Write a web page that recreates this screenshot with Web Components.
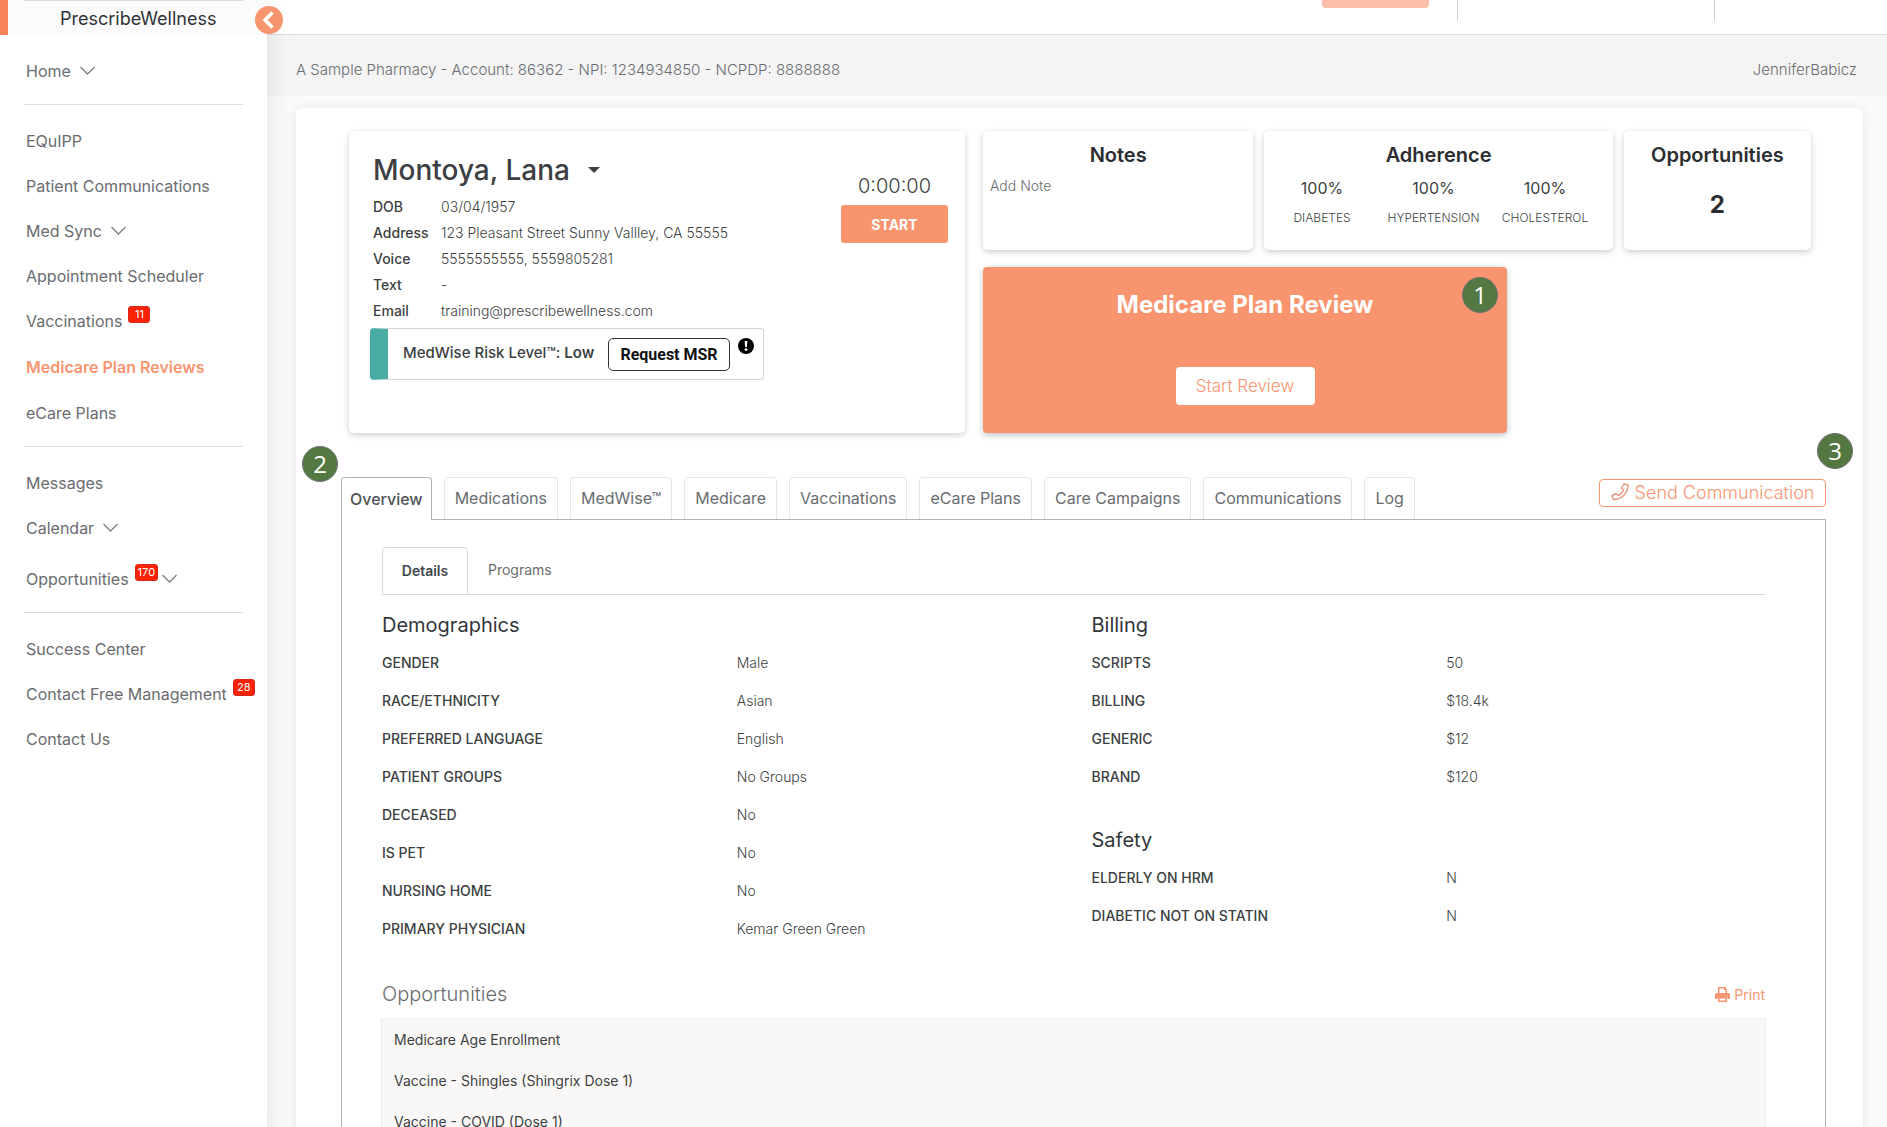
<!DOCTYPE html>
<html lang="en">
<head>
<meta charset="utf-8">
<meta name="viewport" content="width=device-width, initial-scale=1">
<title>PrescribeWellness</title>
<style>
	:root {
		--accent: #f8956f;
		--text: #3d3f42;
		--muted: #6a6c70;
		--line: #dcdcdc;
		--frame: #b4b4b4;
	}
	body {
		margin: 0;
		font-family: Inter, "Open Sans", sans-serif;
		font-size: 14px;
		color: var(--text);
		background: #fafafa;
	}
</style>
</head>
<body>
<app-shell>
	<side-nav slot="nav">
		<nav-group>
			<nav-item caret>Home</nav-item>
		</nav-group>
		<nav-group>
			<nav-item>EQuIPP</nav-item>
			<nav-item>Patient Communications</nav-item>
			<nav-item caret>Med Sync</nav-item>
			<nav-item>Appointment Scheduler</nav-item>
			<nav-item badge="11">Vaccinations</nav-item>
			<nav-item active>Medicare Plan Reviews</nav-item>
			<nav-item>eCare Plans</nav-item>
		</nav-group>
		<nav-group>
			<nav-item>Messages</nav-item>
			<nav-item caret>Calendar</nav-item>
			<nav-item badge="170" caret>Opportunities</nav-item>
		</nav-group>
		<nav-group>
			<nav-item>Success Center</nav-item>
			<nav-item badge="28">Contact Free Management</nav-item>
			<nav-item>Contact Us</nav-item>
		</nav-group>
	</side-nav>

	<top-bar></top-bar>
	<account-bar>
		A Sample Pharmacy - Account: 86362 - NPI: 1234934850 - NCPDP: 8888888
		<span slot="user">JenniferBabicz</span>
	</account-bar>

	<patient-page>
		<patient-card slot="patient" name="Montoya, Lana" timer="0:00:00"></patient-card>
		<stat-card slot="stats" heading="Notes"><note-link>Add Note</note-link></stat-card>
		<stat-card slot="stats" heading="Adherence">
			<adherence-list></adherence-list>
		</stat-card>
		<stat-card slot="stats" heading="Opportunities"><big-count>2</big-count></stat-card>
		<plan-review slot="review"></plan-review>

		<chart-tabs slot="chart">
			<sub-tabs></sub-tabs>
			<chart-columns>
				<info-list slot="left" heading="Demographics" rows='[["Gender","Male"],["Race/Ethnicity","Asian"],["Preferred Language","English"],["Patient Groups","No Groups"],["Deceased","No"],["Is Pet","No"],["Nursing Home","No"],["Primary Physician","Kemar Green Green"]]'></info-list>
				<info-list slot="right" heading="Billing" rows='[["Scripts","50"],["Billing","$18.4k"],["Generic","$12"],["Brand","$120"]]'></info-list>
				<info-list slot="right" heading="Safety" rows='[["Elderly on HRM","N"],["Diabetic not on Statin","N"]]'></info-list>
			</chart-columns>
			<opportunity-list></opportunity-list>
		</chart-tabs>
	</patient-page>
</app-shell>

<script>
class BaseElement extends HTMLElement {
	connectedCallback() {
		if (this.shadowRoot) return;
		this.attachShadow({ mode: "open" });
		this.shadowRoot.innerHTML = `<style>*{box-sizing:border-box} button{font-family:inherit}</style>` + this.render();
	}
	render() {
		return `<slot></slot>`;
	}
}

class AppShell extends BaseElement {
	render() {
		return `
			<style>
				:host { display: grid; grid-template-columns: 267px minmax(0, 1fr); height: 100vh; overflow: hidden; }
				main { min-width: 0; }
			</style>
			<slot name="nav"></slot>
			<main><slot></slot></main>
		`;
	}
}

class SideNav extends BaseElement {
	render() {
		return `
			<style>
				:host { display: block; position: relative; z-index: 2; background: #fff; box-shadow: 0 0 24px rgba(0, 0, 0, 0.1); }
				.brand {
					display: flex; align-items: center; height: 35px; padding: 2px 52px 0;
					border-left: 8px solid #f8835a; background: #fbfbfb;
					color: #2f3338; font-size: 18px; line-height: 32px; white-space: nowrap;
				}
				.rule { position: absolute; top: 0; left: 24px; right: 24px; height: 1px; background: var(--line); }
				.toggle {
					position: absolute; top: 6px; right: -16px; width: 28px; height: 28px; padding: 0;
					border: 0; border-radius: 50%; background: var(--accent);
				}
				nav { padding: 13px 0 0; }
			</style>
			<div class="brand">PrescribeWellness</div>
			<div class="rule"></div>
			<button class="toggle" aria-label="Collapse menu">
				<svg width="28" height="28" viewBox="0 0 28 28"><path d="M17.500 6.500L10 14l7.500 7.500" fill="none" stroke="#fff" stroke-width="3.500"/></svg>
			</button>
			<nav><slot></slot></nav>
		`;
	}
}

class NavGroup extends BaseElement {
	render() {
		return `
			<style>
				:host { display: block; }
				:host(:not(:last-child))::after {
					content: ""; display: block; height: 1px; margin: 11px 24px 13px; background: var(--line);
				}
			</style>
			<slot></slot>
		`;
	}
}

class NavItem extends BaseElement {
	render() {
		const badge = this.getAttribute("badge");
		return `
			<style>
				:host { display: block; }
				a {
					display: flex; align-items: center; height: 45px; padding: 0 0 0 26px;
					color: var(--muted); font-size: 16px; text-decoration: none; white-space: nowrap;
				}
				:host([active]) a { height: 47px; color: var(--accent); font-weight: 600; }
				:host([badge][caret]) a { height: 51px; padding-top: 6px; }
				.badge {
					align-self: flex-start; min-width: 22px; height: 17px; margin: 8px 0 0 6px; padding: 0 2px;
					border: 1px solid #d9261a; border-radius: 3px; background: #fb2305;
					color: #fff; font-size: 11px; line-height: 15px; text-align: center;
				}
				svg { margin-left: 9px; }
				.badge + svg { margin-left: 4px; }
			</style>
			<a href="#"><slot></slot>
				${badge ? `<span class="badge">${badge}</span>` : ""}
				${this.hasAttribute("caret") ? `<svg width="15" height="9" viewBox="0 0 15 9"><path d="M0.5 1l7 7 7-7" fill="none" stroke="#7d7f83" stroke-width="1.3"/></svg>` : ""}
			</a>
		`;
	}
}

class TopBar extends BaseElement {
	render() {
		return `
			<style>
				:host { display: flex; justify-content: flex-end; height: 34px; background: #fff; border-bottom: 1px solid var(--line); }
				.action { width: 107px; height: 8px; margin-right: 28px; border-radius: 0 0 4px 4px; background: #fcbfaa; }
				.cell { height: 21px; border-left: 1px solid #cfcfcf; }
				.wide { width: 257px; }
				.last { width: 173px; }
			</style>
			<div class="action"></div>
			<div class="cell wide"></div>
			<div class="cell last"></div>
		`;
	}
}

class AccountBar extends BaseElement {
	render() {
		return `
			<style>
				:host {
					display: flex; justify-content: space-between; align-items: center; height: 61px;
					padding: 8px 30px 0 29px; box-sizing: border-box; background: #f4f4f4;
					color: var(--muted); font-size: 15px; font-weight: 300;
				}
			</style>
			<span><slot></slot></span>
			<slot name="user"></slot>
		`;
	}
}

class PatientPage extends BaseElement {
	render() {
		return `
			<style>
				:host {
					display: block; margin: 12px 24px 0 29px; padding: 23px 37px 0 45px;
					border-radius: 6px; background: #fff; box-shadow: 0 0 12px rgba(0, 0, 0, 0.08);
				}
				.summary {
					display: grid; grid-template-columns: 616fr 828fr; gap: 18px;
					min-height: 302px; margin: 0 15px 44px 8px;
				}
				.side { display: flex; flex-direction: column; gap: 17px; }
				.stats { display: grid; grid-template-columns: 270fr 348fr 187fr; gap: 11px; height: 119px; }
				.review { display: grid; flex: 1; width: 63.3%; }
			</style>
			<section class="summary">
				<slot name="patient"></slot>
				<div class="side">
					<div class="stats"><slot name="stats"></slot></div>
					<div class="review"><slot name="review"></slot></div>
				</div>
			</section>
			<slot name="chart"></slot>
		`;
	}
}

class PatientCard extends BaseElement {
	render() {
		const rows = [
			["DOB", "03/04/1957"],
			["Address", "123 Pleasant Street Sunny Vallley, CA 55555"],
			["Voice", "5555555555, 5559805281"],
			["Text", "-"],
			["Email", "training@prescribewellness.com"],
		];
		return `
			<style>
				:host {
					display: flex; justify-content: space-between; padding: 20px 17px 0 24px;
					border-radius: 5px; background: #fff; box-shadow: 0 2px 6px rgba(0, 0, 0, 0.2);
				}
				h1 { display: flex; align-items: center; gap: 18px; margin: 0 0 5px; font-size: 28px; font-weight: 500; line-height: 38px; }
				dl { display: grid; grid-template-columns: 68px auto; margin: 0; line-height: 26px; white-space: nowrap; }
				dt { font-size: 14px; font-weight: 500; }
				dd { margin: 0; font-size: 14px; font-weight: 300; }
				.risk {
					display: flex; align-items: center; width: 394px; height: 52px; margin: 4px 0 0 -3px; overflow: hidden;
					border: 1px solid #d4d4d4; border-left: 18px solid #48aca5; border-radius: 4px;
					font-size: 15px; font-weight: 500; white-space: nowrap;
				}
				.risk span { flex: 1; padding: 0 0 3px 15px; }
				.risk b { font-weight: 600; }
				.msr {
					width: 122px; height: 33px; padding: 0; border: 1px solid #333; border-radius: 5px; background: #fff;
					color: #111; font: 700 16px Roboto, sans-serif;
				}
				.risk svg { align-self: flex-start; margin: 9px 9px 0 8px; }
				.timer { width: 107px; padding-top: 22px; text-align: center; font-size: 20px; font-weight: 300; line-height: 26px; }
				.start {
					display: block; width: 100%; height: 38px; margin-top: 6px; border: 0; border-radius: 3px;
					background: var(--accent); color: #fff; font-size: 14px; font-weight: 700;
				}
			</style>
			<div>
				<h1>${this.getAttribute("name")}
					<svg width="12" height="6" viewBox="0 0 12 6"><path d="M0 0h12L6 6z" fill="#3d3f42"/></svg>
				</h1>
				<dl>${rows.map(([k, v]) => `<dt>${k}</dt><dd>${v}</dd>`).join("")}</dl>
				<div class="risk">
					<span>MedWise Risk Level™: <b>Low</b></span>
					<button class="msr">Request MSR</button>
					<svg width="16" height="16" viewBox="0 0 16 16">
						<circle cx="8" cy="8" r="8" fill="#000"/>
						<path d="M6.7 3h2.6l-.4 6H7.1z" fill="#fff"/><circle cx="8" cy="11.6" r="1.4" fill="#fff"/>
					</svg>
				</div>
			</div>
			<div class="timer">${this.getAttribute("timer")}
				<button class="start">START</button>
			</div>
		`;
	}
}

class StatCard extends BaseElement {
	render() {
		return `
			<style>
				:host { display: block; border-radius: 5px; background: #fff; box-shadow: 0 2px 6px rgba(0, 0, 0, 0.2); }
				h2 { margin: 11px 0 8px; color: #2b2d30; font-size: 20px; font-weight: 600; line-height: 26px; text-align: center; }
			</style>
			<h2>${this.getAttribute("heading")}</h2>
			<slot></slot>
		`;
	}
}

class NoteLink extends BaseElement {
	render() {
		return `
			<style>
				:host { display: block; padding: 0 7px; }
				a { color: var(--muted); font-size: 14px; font-weight: 300; line-height: 20px; text-decoration: none; }
			</style>
			<a href="#"><slot></slot></a>
		`;
	}
}

class AdherenceList extends BaseElement {
	render() {
		const measures = ["Diabetes", "Hypertension", "Cholesterol"];
		return `
			<style>
				:host { display: grid; grid-template-columns: repeat(3, 1fr); padding: 0 12px 0 2px; text-align: center; }
				.value { font-size: 16px; line-height: 24px; }
				.label { margin-top: 8px; font-size: 12px; font-weight: 300; line-height: 20px; text-transform: uppercase; }
			</style>
			${measures.map(m => `<div><div class="value">100%</div><div class="label">${m}</div></div>`).join("")}
		`;
	}
}

class BigCount extends BaseElement {
	render() {
		return `
			<style>
				:host { display: block; padding-top: 12px; color: #2b2d30; font-size: 24px; font-weight: 700; line-height: 34px; text-align: center; }
			</style>
			<slot></slot>
		`;
	}
}

class PlanReview extends BaseElement {
	render() {
		return `
			<style>
				:host {
					display: flex; flex-direction: column; align-items: center; justify-content: space-between;
					position: relative; padding: 22px 0 28px;
					border-radius: 4px; background: var(--accent); box-shadow: 0 2px 6px rgba(0, 0, 0, 0.25);
				}
				h2 { margin: 0; color: #fff; font-size: 24px; font-weight: 700; line-height: 32px; }
				button { width: 139px; height: 38px; padding: 0; border: 0; border-radius: 4px; background: #fff; color: var(--accent); font-size: 17px; font-weight: 300; }
				step-marker { position: absolute; top: 10px; right: 9px; }
			</style>
			<h2>Medicare Plan Review</h2>
			<button>Start Review</button>
			<step-marker>1</step-marker>
		`;
	}
}

class StepMarker extends BaseElement {
	render() {
		return `
			<style>
				:host {
					display: block; box-sizing: border-box; width: 36px; height: 36px;
					border: 1px solid #6c6f74; border-radius: 50%; background: #547841;
					color: #fff; font: 24px/33px "Open Sans", sans-serif; text-align: center;
				}
			</style>
			<slot></slot>
		`;
	}
}

class ChartTabs extends BaseElement {
	render() {
		const tabs = ["Medications", "MedWise™", "Medicare", "Vaccinations", "eCare Plans", "Care Campaigns", "Communications", "Log"];
		return `
			<style>
				:host { display: block; position: relative; }
				.bar { display: flex; align-items: flex-start; height: 42px; }
				.tabs { display: flex; gap: 12px; flex: 1; }
				.tab {
					height: 42px; padding: 0 10px 2px; border: 1px solid #e6e6e6; border-bottom: 0; border-radius: 4px 4px 0 0;
					background: #fff; color: var(--muted); font-size: 16px; white-space: nowrap;
				}
				.tab[aria-selected=true] { position: relative; height: 43px; padding: 0 8px; border-color: var(--frame); color: #505358; font-weight: 500; }
				.send {
					display: flex; align-items: center; justify-content: center; gap: 6px; width: 227px; height: 28px; margin-top: 2px; padding: 0 0 2px;
					border: 1px solid var(--accent); border-radius: 4px; background: #fff;
					color: var(--accent); font-size: 18px; font-weight: 300; white-space: nowrap;
				}
				.body { padding: 27px 60px 0 40px; border: 1px solid var(--frame); border-bottom: 0; }
				step-marker { position: absolute; }
				.two { top: -31px; left: -39px; }
				.three { top: -44px; right: -27px; }
			</style>
			<div class="bar">
				<div class="tabs" role="tablist">
					<button class="tab" role="tab" aria-selected="true">Overview</button>
					${tabs.map(t => `<button class="tab" role="tab">${t}</button>`).join("")}
				</div>
				<button class="send">
					<svg width="18" height="18" viewBox="0 0 18 18"><path d="M13 1l4 1c0 8-6 14.500-14.500 14.500L1 12.500l4-2 2 2c2.500-1 4.500-3 5.500-5.500l-2-2z" fill="none" stroke="#e59a80" stroke-width="1.400" stroke-linejoin="round"/></svg>
					Send Communication
				</button>
			</div>
			<div class="body"><slot></slot></div>
			<step-marker class="two">2</step-marker>
			<step-marker class="three">3</step-marker>
		`;
	}
}

class SubTabs extends BaseElement {
	render() {
		return `
			<style>
				:host { display: flex; height: 47px; border-bottom: 1px solid #d8dadb; }
				button { height: 46px; padding: 0 20px 2px; border: 0; background: none; color: var(--muted); font-size: 14px; }
				[aria-selected=true] {
					width: 86px; height: 47px; padding: 0 0 2px; border: 1px solid #d8dadb; border-bottom: 0; border-radius: 4px 4px 0 0;
					background: #fff; color: #43464a; font-weight: 600;
				}
			</style>
			<button role="tab" aria-selected="true">Details</button>
			<button role="tab">Programs</button>
		`;
	}
}

class ChartColumns extends BaseElement {
	render() {
		return `
			<style>
				:host { display: grid; grid-template-columns: 1fr 1fr; margin: 16px -36px 0 0; }
			</style>
			<div><slot name="left"></slot></div>
			<div><slot name="right"></slot></div>
		`;
	}
}

class InfoList extends BaseElement {
	render() {
		const rows = JSON.parse(this.getAttribute("rows"));
		return `
			<style>
				:host { display: block; margin-bottom: 30px; }
				h3 { margin: 0 0 5px; color: #33363a; font-size: 20px; font-weight: 400; line-height: 28px; }
				dl { display: grid; grid-template-columns: 1fr 1fr; margin: 0; line-height: 38px; }
				dt { font-weight: 500; text-transform: uppercase; }
				dd { margin: 0; font-weight: 300; }
			</style>
			<h3>${this.getAttribute("heading")}</h3>
			<dl>${rows.map(([k, v]) => `<dt>${k}</dt><dd>${v}</dd>`).join("")}</dl>
		`;
	}
}

class OpportunityList extends BaseElement {
	render() {
		const items = ["Medicare Age Enrollment", "Vaccine - Shingles (Shingrix Dose 1)", "Vaccine - COVID (Dose 1)"];
		return `
			<style>
				:host { display: block; }
				header { display: flex; align-items: center; justify-content: space-between; height: 32px; margin-bottom: 8px; }
				h3 { margin: 0; color: var(--muted); font-size: 20px; font-weight: 300; }
				a { display: flex; align-items: center; gap: 4px; color: var(--accent); font-size: 14px; text-decoration: none; }
				ul { margin: 0 -1px; padding: 0 12px; border: 1px solid #f0efee; background: #f9f8f7; list-style: none; line-height: 41px; }
			</style>
			<header>
				<h3>Opportunities</h3>
				<a href="#">
					<svg width="15" height="15" viewBox="0 0 15 15" fill="#f8956f">
						<path d="M3 0h7l2 2v4h-1.500V3H9V1.500H4.500V6H3z"/>
						<path d="M2 6h11a2 2 0 0 1 2 2v4h-2.500V9.500h-10V12H0V8a2 2 0 0 1 2-2z"/>
						<path d="M3 9h9v6H3zM4.500 11.500v2h6v-2z" fill-rule="evenodd"/>
					</svg>
					Print
				</a>
			</header>
			<ul>${items.map(i => `<li>${i}</li>`).join("")}</ul>
		`;
	}
}

customElements.define("app-shell", AppShell);
customElements.define("side-nav", SideNav);
customElements.define("nav-group", NavGroup);
customElements.define("nav-item", NavItem);
customElements.define("top-bar", TopBar);
customElements.define("account-bar", AccountBar);
customElements.define("patient-page", PatientPage);
customElements.define("patient-card", PatientCard);
customElements.define("stat-card", StatCard);
customElements.define("note-link", NoteLink);
customElements.define("adherence-list", AdherenceList);
customElements.define("big-count", BigCount);
customElements.define("plan-review", PlanReview);
customElements.define("step-marker", StepMarker);
customElements.define("chart-tabs", ChartTabs);
customElements.define("sub-tabs", SubTabs);
customElements.define("chart-columns", ChartColumns);
customElements.define("info-list", InfoList);
customElements.define("opportunity-list", OpportunityList);
</script>
</body>
</html>
